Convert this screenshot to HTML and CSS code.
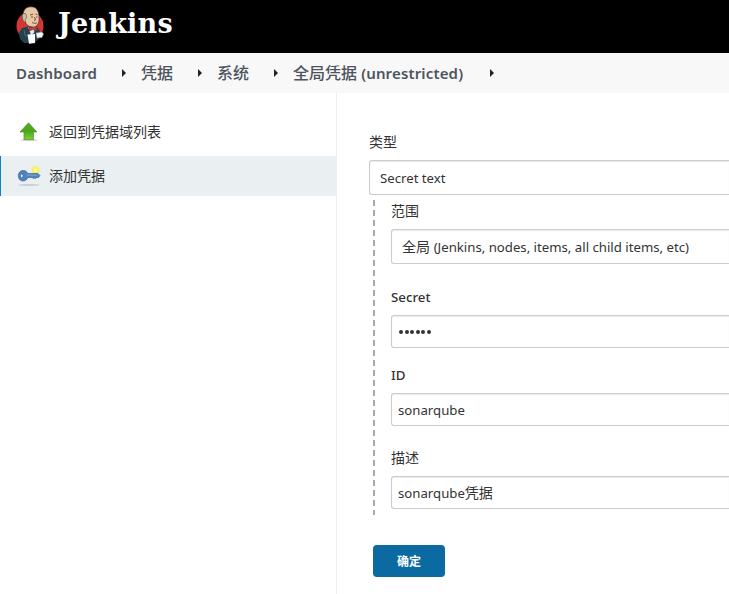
FILE: index.html
```html
<!DOCTYPE html>
<html lang="zh-CN">
<head>
<meta charset="utf-8">
<title>Jenkins</title>
<link rel="stylesheet" href="styles.css">
</head>
<body>
<header class="header">
  <svg class="logo" width="28" height="38" viewBox="0 0 28 38">
    <ellipse cx="14" cy="20" rx="13.500" ry="14" fill="#d33833"/>
    <path d="M3 27l3-5 8-2 7 1 3 4-1 8-5 4H8l-4-4z" fill="#25414d"/>
    <path d="M12 21l4 1 3-1-1 6-3 2z" fill="#dfe7ea"/>
    <path d="M7 10C7 4 10 .8 15 .8s7.500 3.200 8 9.200c.2 3 .2 6-1 8-1.300 2.200-3 3.500-6 3-4-.5-6-2.500-6.500-5C7 15 6.500 13 7 10z" fill="#e8c9a5" stroke="#4b3428" stroke-width=".7"/>
    <path d="M7.200 7.500C5.500 10 6 14 9 16.500l.5-3 1.500-2.500-1.500-3.500z" fill="#c9bcaa" stroke="#4b3428" stroke-width=".5"/>
    <path d="M14 9l3-.8M19.500 8l2 .6M15 11h2M20 11h1.500M18.500 11l1 3-1.500.5M16 16.500c2 1 4 1 5 .2" fill="none" stroke="#513527" stroke-width=".8"/>
    <path d="M13 20.500l4 2 4-2v4.500l-4-1.500-4 1.500z" fill="#d33833" stroke="#6f201e" stroke-width=".5"/>
    <path d="M11.500 28.500l7.500-.5v9l-6 .8z" fill="#fff"/>
    <path d="M20 27l6-1 1.500 2-1.500 3.500-5 .5z" fill="#f4f4f4" stroke="#8d8d8d" stroke-width=".5"/>
    <path d="M8 24l1 5 3 2" fill="none" stroke="#4e6b77"/>
  </svg>
  <span class="brand">Jenkins</span>
</header>
<nav class="crumbs">
  <span class="crumb latin dash">Dashboard</span><i class="arrow"></i>
  <span class="crumb">凭据</span><i class="arrow"></i>
  <span class="crumb">系统</span><i class="arrow"></i>
  <span class="crumb global">全局凭据 <b class="latin">(unrestricted)</b></span><i class="arrow"></i>
</nav>
<div class="page">
  <aside class="side">
    <a class="task">
      <svg class="icon" width="24" height="24" viewBox="0 0 24 24">
        <defs><linearGradient id="g" x1="0" y1="0" x2="0" y2="1"><stop offset="0" stop-color="#5aa52c"/><stop offset=".5" stop-color="#4ba51b"/><stop offset="1" stop-color="#7ed035"/></linearGradient></defs>
        <ellipse cx="12" cy="20" rx="8.500" ry="1.200" fill="#cfcfcf"/>
        <path d="M11.500 2.800L20 12h-3.500v7.500h-9.500V12H3z" fill="url(#g)" stroke="#4c9429" stroke-width=".7"/>
      </svg>
      <span>返回到凭据域列表</span>
    </a>
    <a class="task active">
      <svg class="icon" width="24" height="24" viewBox="0 0 24 24">
        <ellipse cx="12" cy="21" rx="10.500" ry="1" fill="#cbd0d3"/>
        <circle cx="18.500" cy="6" r="4" fill="#fcf05f"/><circle cx="18.500" cy="6" r="1.800" fill="#fffbc1"/>
        <path d="M6 6.500c3 0 4.300 1.500 4.800 3H21l2 2-1.500 2h-1.700l-1.200 1-1.300-.5-1.300.5-1-1h-4.200C10 15.500 8.500 17 6 17c-3 0-4.700-2.500-4.700-5.200S3 6.500 6 6.500z" fill="#5383bc" stroke="#3a69a3" stroke-width=".7"/>
        <path d="M10 11.200h10.500" stroke="#7fa5d1"/>
        <ellipse cx="4.800" cy="11.800" rx="1.300" ry="1.900" fill="#f2f5f7" stroke="#2d5b95" stroke-width=".6"/>
      </svg>
      <span>添加凭据</span>
    </a>
  </aside>
  <main class="main">
    <div class="label">类型</div>
    <div class="select"><span class="value">Secret text</span></div>
    <section class="group">
      <div class="label">范围</div>
      <div class="select"><span>全局 <span class="value">(Jenkins, nodes, items, all child items, etc)</span></span></div>
      <div class="label medium l-secret">Secret</div>
      <div class="input"><span class="dots"><i></i><i></i><i></i><i></i><i></i><i></i></span></div>
      <div class="label medium l-id">ID</div>
      <div class="input"><span class="value">sonarqube</span></div>
      <div class="label l-desc">描述</div>
      <div class="input"><span class="value">sonarqube</span>凭据</div>
    </section>
    <button class="submit">确定</button>
  </main>
</div>
</body>
</html>
```
FILE: styles.css
```css
* { box-sizing: border-box; }
body { margin: 0; height: 594px; overflow: hidden; background: #fff; color: #333; font: 14px/20px "Noto Sans", "Noto Sans CJK SC", sans-serif; }
.header { height: 53px; background: #000; display: flex; padding: 6px 0 0 16px; }
.logo { flex: none; }
.brand { margin: 0 0 0 14px; color: #fff; font: bold 27px/36px "DejaVu Serif", serif; letter-spacing: .2px; }
.crumbs { height: 40px; background: #f8f8f8; display: flex; align-items: center; padding-left: 16px; color: #4d545d; font-size: 16px; font-weight: 500; white-space: nowrap; }
.latin { font: 600 15px/20px "Noto Sans", sans-serif; letter-spacing: .15px; }
.crumb { flex: none; width: 33px; }
.crumb.dash { width: 82px; }
.crumb.global { width: 173px; }
.arrow { flex: none; border: 4px solid transparent; border-left: 4px solid #222; border-right: 0; margin: 0 15px 0 24px; }
.page { display: flex; height: 501px; }
.side { flex: none; width: 337px; border-right: 1px solid #eaeff2; padding-top: 19px; }
.task { height: 40px; display: flex; align-items: center; gap: 8px; padding-left: 17px; margin-bottom: 4px; }
.task.active { background: #eaeff2; border-left: 1px solid #0b83cd; padding-left: 16px; }
.icon { flex: none; }
.main { flex: 1; min-width: 0; padding: 39px 0 0 32px; }
.label { height: 20px; margin-bottom: 8px; white-space: nowrap; }
.medium { font-size: 13.300px; font-weight: 500; }
.value { font-size: 13.200px; }
.select, .input { display: flex; align-items: center; border: 1px solid #ccc; border-right: 0; border-radius: 3px 0 0 3px; box-shadow: inset 0 1px 1px rgba(0,0,0,.08); white-space: nowrap; }
.select { height: 35px; padding-left: 10px; }
.input { height: 33px; padding-left: 6px; }
.group { margin: 5px 0 0 4px; height: 315px; padding: 1px 0 0 18px; background: repeating-linear-gradient(#aaa 0 6px, transparent 6px 10px) left top / 2px 100% no-repeat; }
.l-secret { margin-top: 23px; }
.l-id { margin-top: 17px; }
.l-desc { margin-top: 22px; }
.dots { display: flex; gap: 1.600px; padding-left: 1px; }
.dots i { width: 4px; height: 4px; border-radius: 50%; background: #333; }
.submit { display: block; margin: 30px 0 0 4px; width: 72px; height: 32px; padding: 0; border: 0; border-radius: 4px; background: #0b6aa2; color: #fff; font: bold 12px/20px "Noto Sans CJK SC", sans-serif; }
```
